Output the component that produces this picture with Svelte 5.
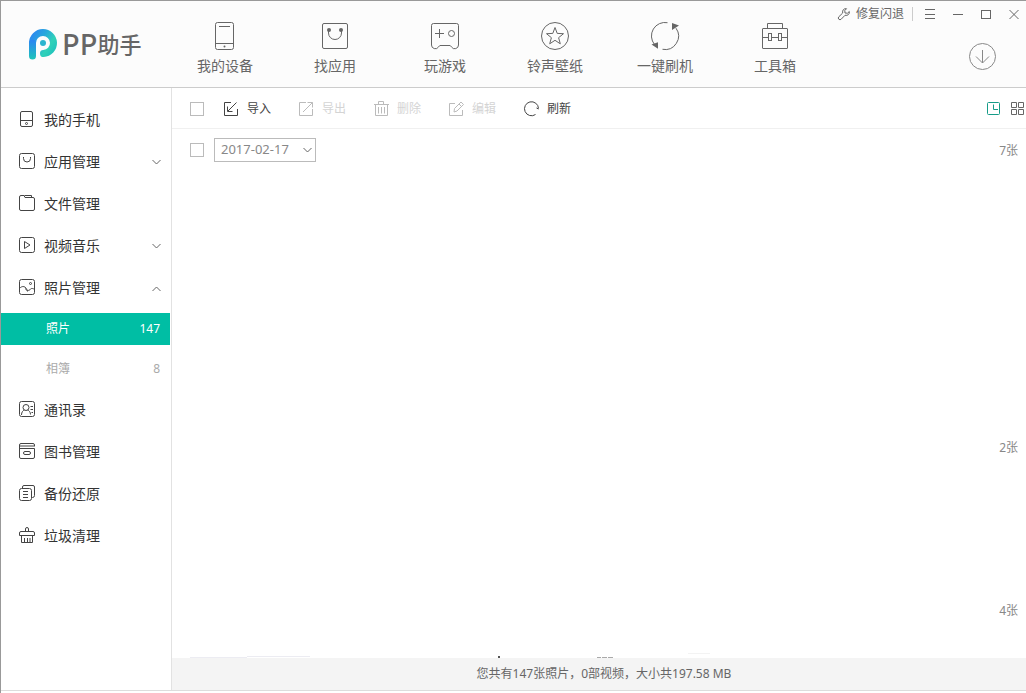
<script>
  const nav = [
    { label: '我的设备', icon: '<rect x="5.5" y="1.5" width="18" height="27" rx="2"/><path d="M9 5.5h11M5.5 22.5h18"/><circle cx="14.5" cy="25.5" r="1" fill="currentColor" stroke="none"/>' },
    { label: '找应用', icon: '<rect x="2.5" y="2.5" width="25" height="25" rx="1.5"/><path d="M8.5 9v3a6.5 6.5 0 0 0 13 0V9"/><circle cx="9" cy="9" r="2" fill="currentColor" stroke="none"/><circle cx="21" cy="9" r="2" fill="currentColor" stroke="none"/>' },
    { label: '玩游戏', icon: '<path d="M3.5 2.5h23a2 2 0 0 1 2 2v19.5a3.8 3.8 0 0 1-7 2l-1.300-1.500H9.800L8.500 26a3.800 3.800 0 0 1-7-2V4.500a2 2 0 0 1 2-2zM5 12.500h9M9.500 8v9"/><circle cx="21.500" cy="12.500" r="3"/>' },
    { label: '铃声壁纸', icon: '<circle cx="15" cy="15" r="13.5"/><path d="M15 6.500l2.200 5.900 6.300.3-4.900 4 1.700 6.100-5.300-3.500-5.300 3.500 1.700-6.100-4.900-4 6.300-.3z"/>' },
    { label: '一键刷机', icon: '<path d="M17.500 1.700A13.500 13.500 0 0 0 4.500 23.500M26 7.200A13.500 13.500 0 0 1 12.500 28.300"/><path d="M22 2l7 2.500-7 4.500zM1.500 23.500l6.500-2.200v6.400z" fill="currentColor" stroke="none"/>' },
    { label: '工具箱', icon: '<rect x="2.5" y="7.5" width="25" height="20" rx=".5"/><path d="M7.500 7.500v-5h15v5M2.500 16.500h6M11.500 16.500h7M21.500 16.500h6"/><rect x="8.5" y="12.5" width="3" height="7"/><rect x="18.5" y="12.5" width="3" height="7"/>' }
  ];

  const square = '<rect x=".5" y=".5" width="15" height="15" rx="2"/>';
  const menu = [
    { label: '我的手机', icon: '<rect x="1.5" y=".5" width="12" height="15" rx="1.500"/><path d="M1.500 9.500h12"/><circle cx="7.500" cy="12.500" r="1"/>' },
    { label: '应用管理', arrow: 'down', icon: square + '<path d="M4.500 4v1.500a3.500 3.500 0 0 0 7 0V4"/>' },
    { label: '文件管理', icon: '<path d="M2 .5h3l1 2h8a1.500 1.500 0 0 1 1.500 1.500v10a1.500 1.500 0 0 1-1.500 1.500H2A1.500 1.500 0 0 1 .5 14V2A1.500 1.500 0 0 1 2 .5zM5.500.5h7v2"/>' },
    { label: '视频音乐', arrow: 'down', icon: square + '<path d="M5.500 4.500v7l5.500-3.500z"/>' },
    {
      label: '照片管理',
      arrow: 'up',
      icon: square + '<circle cx="11.500" cy="4.500" r="1"/><path d="M.5 9.500C3 6.500 7 6.500 8.500 12.500M6.500 9.500c.5 2.500 4 2.500 5 .5 1-1 3-.5 4 .5"/>',
      children: [
        { label: '照片', count: 147, active: true },
        { label: '相簿', count: 8 }
      ]
    },
    { label: '通讯录', icon: square + '<circle cx="7" cy="6.500" r="3"/><path d="M2.500 14c0-3 1.500-4.500 3-5M8.500 9c1.500.5 3 2 3 4.500M11.500 5.500h2.500M11.500 8.500h2.500M12.500 11.500h1.500"/>' },
    { label: '图书管理', icon: '<path d="M15.500 3.500V2A1.500 1.500 0 0 0 14 .5H2A1.500 1.500 0 0 0 .5 2v12A1.500 1.500 0 0 0 2 15.500h12a1.500 1.500 0 0 0 1.500-1.500V5.500H.5M1 3h14"/><rect x="4.5" y="8.5" width="7" height="3" rx="1.500"/>' },
    { label: '备份还原', icon: '<rect x=".5" y="3.5" width="12" height="12" rx="2"/><path d="M3.500 3V2A1.500 1.500 0 0 1 5 .5h9A1.500 1.500 0 0 1 15.500 2v8.500a2 2 0 0 1-2 2h-.5M4 6.500h5M4 9.500h5M4 12.500h5"/>' },
    { label: '垃圾清理', icon: '<path d="M6.500 4V2a1.500 1.500 0 0 1 3 0v2M2 4.500h12a1.500 1.500 0 0 1 1.500 1.500v2.500H.5V6A1.500 1.500 0 0 1 2 4.500zM2.500 8.500v7h11v-7M5.500 11v4.500M8.500 11v4.500M11 11v4.500"/>' }
  ];

  const tools = [
    { label: '导入', icon: '<path d="M8 1.500H1.500v13h13V8M13.500 1.500l-8.500 8.500M4.500 5.500v5h5"/>' },
    { label: '导出', disabled: true, icon: '<path d="M8 1.500H1.500v13h13V8M5 11l9.500-9.500M9.500 1.500h5v5"/>' },
    { label: '删除', disabled: true, icon: '<path d="M1 3.500h15M5.500 3.500v-3h5v3M2.500 3.500v11h12v-11M5.500 6v6.500M8.500 6v6.500M11.500 6v6.500"/>' },
    { label: '编辑', disabled: true, icon: '<path d="M7 2.500H1.500v12h13V9M6 11l.5-3.500 6.500-6.500 2.500 2.500-6.500 6.500zM11 3l2.500 2.500"/>' },
    { label: '刷新', icon: '<path d="M12.500 13.500A7 7 0 1 1 15.500 7.500M15.500 8l-2-1"/>' }
  ];

  const dates = ['2017-02-17'];
  let date = $state('2017-02-17');
</script>

<div class="window">
  <header>
    <div class="brand">
      <svg width="28" height="31" viewBox="0 0 28 31" aria-hidden="true">
        <defs>
          <linearGradient id="ring" gradientUnits="userSpaceOnUse" x1="0" y1="8" x2="24" y2="24">
            <stop offset="0" stop-color="#2b87f0" />
            <stop offset=".4" stop-color="#28a8dc" />
            <stop offset=".75" stop-color="#30d2b8" />
            <stop offset="1" stop-color="#22c4bd" />
          </linearGradient>
          <linearGradient id="stem" gradientUnits="userSpaceOnUse" x1="0" y1="12" x2="0" y2="30">
            <stop offset="0" stop-color="#2b87f0" />
            <stop offset="1" stop-color="#1fc4ba" />
          </linearGradient>
        </defs>
        <path d="M3.500 14A10.500 10.500 0 1 1 14.500 24.500" stroke="url(#ring)" stroke-width="7" stroke-linecap="round" />
        <path d="M3.500 14L3.501 27" stroke="url(#stem)" stroke-width="7" stroke-linecap="round" />
        <circle cx="14" cy="14" r="3" fill="#2bb5cf" stroke="none" />
      </svg>
      <span class="wordmark"><span class="latin">PP</span>助手</span>
    </div>
    <nav>
      {#each nav as item}
        <button type="button">
          <svg width="30" height="30" viewBox="0 0 30 30" aria-hidden="true">{@html item.icon}</svg>
          {item.label}
        </button>
      {/each}
    </nav>
    <div class="corner">
      <div class="titlebar">
        <button type="button" class="repair">
          <svg width="12" height="12" viewBox="0 0 12 12" aria-hidden="true">
            <path d="M8.500.7C6 .2 4 2.200 4.700 5L.8 8.800a1.600 1.600 0 0 0 2.400 2.400L7 7.300c2.800.7 4.800-1.300 4.300-3.800L9.500 5.200 7 5 6.800 2.500z" />
          </svg>
          修复闪退
        </button>
        <button type="button" aria-label="菜单"><svg width="12" height="12" viewBox="0 0 12 12"><path d="M1 1.500h10M1 6.500h10M1 10.500h10" /></svg></button>
        <button type="button" aria-label="最小化"><svg width="12" height="12" viewBox="0 0 12 12"><path d="M1 6.500h10" /></svg></button>
        <button type="button" aria-label="最大化"><svg width="12" height="12" viewBox="0 0 12 12"><rect x="1.500" y="2.500" width="9" height="8" /></svg></button>
        <button type="button" aria-label="关闭"><svg width="12" height="12" viewBox="0 0 12 12"><path d="M1.500 2l9 9M10.500 2l-9 9" /></svg></button>
      </div>
      <button type="button" class="download" aria-label="下载">
        <svg width="28" height="28" viewBox="0 0 28 28"><circle cx="14.500" cy="14.500" r="13" /><path d="M14.500 8v13M8 14.500l6.500 6.500 6.500-6.500" /></svg>
      </button>
    </div>
  </header>

  <div class="body">
    <aside>
      {#each menu as item}
        <button type="button" class="entry">
          <svg width="16" height="18" viewBox="0 0 16 18" aria-hidden="true">{@html item.icon}</svg>
          <span>{item.label}</span>
          {#if item.arrow}
            <svg class="arrow" class:up={item.arrow === 'up'} width="9" height="7" viewBox="0 0 9 7" aria-hidden="true"><path d="M.5 1l4 4 4-4" /></svg>
          {/if}
        </button>
        {#each item.children ?? [] as child}
          <button type="button" class="child" class:active={child.active}>
            <span>{child.label}</span>
            <span>{child.count}</span>
          </button>
        {/each}
      {/each}
    </aside>

    <main>
      <div class="toolbar">
        <input type="checkbox" aria-label="全选" />
        <div class="tools">
          {#each tools as tool}
            <button type="button" disabled={tool.disabled}>
              <svg width="16" height="16" viewBox="0 0 16 16" aria-hidden="true">{@html tool.icon}</svg>
              {tool.label}
            </button>
          {/each}
        </div>
        <div class="views">
          <button type="button" class="on" aria-label="时间视图"><svg width="14" height="14" viewBox="0 0 14 14"><rect x=".5" y=".5" width="12" height="12" rx="1" /><path d="M6.500 2.500v5H11" /></svg></button>
          <button type="button" aria-label="网格视图"><svg width="14" height="14" viewBox="0 0 14 14"><path d="M.5.5h5v5h-5zM7.500.5h5v5h-5zM.5 7.500h5v5h-5zM7.500 7.500h5v5h-5z" /></svg></button>
        </div>
      </div>

      <div class="photos">
        <section class="first">
          <div class="row">
            <input type="checkbox" aria-label="选择该日期" />
            <div class="picker">
              <select aria-label="日期" bind:value={date}>
                {#each dates as day}<option value={day}>{day}</option>{/each}
              </select>
              <svg class="caret" width="9" height="7" viewBox="0 0 9 7" aria-hidden="true"><path d="M.5 1l4 4 4-4" /></svg>
            </div>
            <span class="total">7张</span>
          </div>
        </section>
        <section class="second">
          <div class="row"><span class="total">2张</span></div>
        </section>
        <section class="third">
          <div class="row"><span class="total">4张</span></div>
          <svg class="edge" width="540" height="5" viewBox="0 0 540 5" aria-hidden="true">
            <path d="M0 4h57v1H0zM57 3h63v1H57z" fill="#ececf2" />
            <path d="M308 3h2v2h-2z" fill="#555" />
            <path d="M407 4h4v1h-4zM412 4h5v1h-5zM418 4h5v1h-5z" fill="#aaa" />
            <path d="M498 0h22v1h-22z" fill="#f3f3f3" />
          </svg>
        </section>
      </div>

      <footer>您共有147张照片，0部视频，大小共197.58 MB</footer>
    </main>
  </div>
</div>

<style>
  :global(body) {
    margin: 0;
    background: #fff;
  }
  .window {
    box-sizing: border-box;
    display: flex;
    flex-direction: column;
    min-height: 100vh;
    padding-bottom: 2px;
    border-top: 1px solid #999;
    border-left: 1px solid #999;
    font: 12px/16px 'Noto Sans', 'Noto Sans CJK SC', sans-serif;
    color: #666;
  }
  button {
    padding: 0;
    border: 0;
    background: none;
    font: inherit;
    color: inherit;
    white-space: nowrap;
  }
  svg {
    display: block;
    flex: none;
    fill: none;
    stroke: currentColor;
    overflow: visible;
  }
  header {
    display: flex;
    height: 86px;
    border-bottom: 1px solid #ccc;
    background: #fcfcfc;
  }
  .brand {
    box-sizing: border-box;
    display: flex;
    align-items: center;
    gap: 5px;
    width: 169px;
    padding-left: 28px;
  }
  .wordmark {
    display: flex;
    align-items: center;
    font-size: 22px;
    line-height: 32px;
    font-weight: 500;
  }
  .latin {
    font-size: 29px;
  }
  nav {
    display: flex;
  }
  nav button {
    display: flex;
    flex-direction: column;
    align-items: center;
    gap: 5px;
    width: 110px;
    padding-top: 20px;
    font-size: 14px;
    line-height: 20px;
  }
  .corner {
    display: flex;
    flex-direction: column;
    align-items: flex-end;
    gap: 15px;
    margin-left: auto;
  }
  .titlebar {
    display: flex;
    align-items: center;
    gap: 16px;
    height: 26px;
    padding-right: 6px;
  }
  .repair {
    display: flex;
    align-items: center;
    gap: 6px;
    height: 14px;
    padding-right: 8px;
    margin-right: -5px;
    border-right: 1px solid #ccc;
  }
  .download {
    margin-right: 30px;
    color: #888;
  }
  .body {
    display: flex;
    flex: 1;
    border-bottom: 1px solid #ddd;
  }
  aside {
    box-sizing: border-box;
    display: flex;
    flex: none;
    flex-direction: column;
    width: 171px;
    padding: 11px 1px 0 0;
    border-right: 1px solid #e2e2e2;
    color: #333;
  }
  .entry {
    display: flex;
    align-items: center;
    gap: 9px;
    height: 42px;
    padding: 0 9px 0 18px;
    font-size: 14px;
  }
  .entry > svg:first-child {
    color: #444;
  }
  .entry .arrow {
    margin-left: auto;
    color: #666;
  }
  .up {
    transform: rotate(180deg);
  }
  .child {
    display: flex;
    align-items: center;
    justify-content: space-between;
    height: 32px;
    margin: 4px 0;
    padding: 0 10px 0 45px;
    color: #aaa;
  }
  .child.active {
    background: #00bea4;
    color: #fff;
  }
  main {
    display: flex;
    flex: 1;
    flex-direction: column;
    min-width: 0;
  }
  input {
    appearance: none;
    box-sizing: border-box;
    width: 14px;
    height: 14px;
    margin: 0;
    border: 1px solid #bbb;
    background: #fff;
  }
  .toolbar {
    display: flex;
    align-items: center;
    height: 38px;
    padding: 2px 1px 0 18px;
    border-bottom: 1px solid #f0f0f0;
  }
  .tools {
    display: flex;
    gap: 27px;
    margin-left: 19px;
  }
  .tools button {
    display: flex;
    align-items: center;
    gap: 8px;
    color: #444;
  }
  .tools button:disabled {
    color: #d4d4d4;
  }
  .tools button:disabled svg {
    color: #bbb;
  }
  .views {
    display: flex;
    gap: 10px;
    margin-left: auto;
  }
  .views .on {
    color: #169c88;
  }
  .photos {
    display: flex;
    flex: 1;
    flex-direction: column;
  }
  .first {
    flex: 297 1 0;
  }
  .second {
    flex: 163 1 0;
  }
  .third {
    display: flex;
    flex: 69 1 0;
    flex-direction: column;
    justify-content: space-between;
  }
  .edge {
    margin-left: 18px;
    stroke: none;
  }
  .row {
    display: flex;
    align-items: center;
    gap: 10px;
    height: 42px;
    padding: 0 8px 0 18px;
  }
  .total {
    padding-top: 2px;
    margin-left: auto;
    color: #888;
  }
  .picker {
    position: relative;
  }
  select {
    appearance: none;
    display: block;
    box-sizing: border-box;
    width: 102px;
    height: 24px;
    padding: 0 20px 2px 6px;
    border: 1px solid #bbb;
    border-radius: 0;
    background: #fff;
    font: inherit;
    font-size: 13px;
    color: #888;
  }
  .caret {
    position: absolute;
    top: 9px;
    right: 4px;
    pointer-events: none;
  }
  footer {
    padding: 8px 0 8px 10px;
    background: #f4f4f4;
    text-align: center;
  }
</style>
